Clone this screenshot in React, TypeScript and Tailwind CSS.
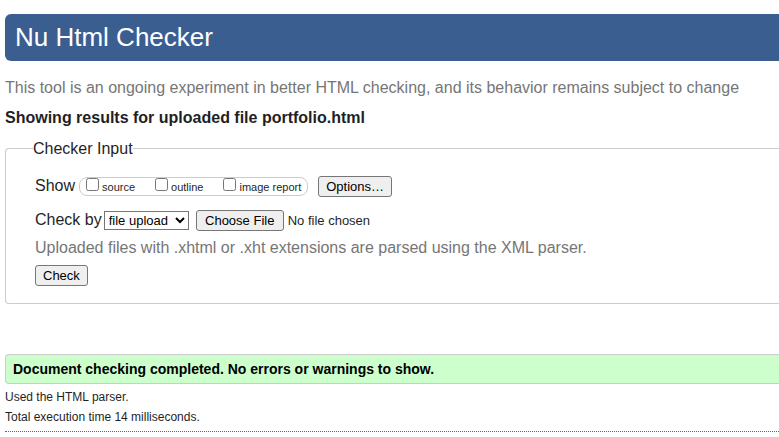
const checks = ["source", "outline", "image report"];

const buttonStyle =
  "h-[21px] rounded-[3px] border border-[#767676] bg-[#efefef] px-[7px] text-[13px] leading-[19px] text-black";

export default function App() {
  return (
    <div className="overflow-hidden bg-white pt-3.5 pl-[5px] font-['Liberation_Sans',Arial,sans-serif] text-base text-[#1f1f26]">
      <header className="rounded-l-md bg-[#3b5e91] px-2.5 py-1">
        <h1 className="text-[26px] leading-[39px] text-white">Nu Html Checker</h1>
      </header>

      <main>
        <p className="mt-[17px] leading-5 whitespace-nowrap text-[#767676]">
          This tool is an ongoing experiment in better HTML checking, and its behavior remains subject to change
        </p>
        <h2 className="mt-2.5 leading-5 font-bold">Showing results for uploaded file portfolio.html</h2>

        <form onSubmit={(event) => event.preventDefault()}>
          <fieldset className="mt-[9px] rounded-l border border-r-0 border-[#ccc] pr-4 pb-[17px] pl-[29px]">
            <legend className="-ml-0.5 pt-0.5 leading-5">Checker Input</legend>

            <div className="mt-[17px] flex h-[21px] items-center">
              <span className="pb-0.5 leading-5">Show</span>
              <div className="ml-1 flex h-[19px] items-start gap-5 rounded-lg border border-[#ccc] px-1.5">
                {checks.map((label) => (
                  <label key={label} className="flex gap-[3px] text-[11px] leading-[18px]">
                    <input type="checkbox" className="size-[13px]" />
                    {label}
                  </label>
                ))}
              </div>
              <button type="button" className={`ml-2.5 ${buttonStyle}`}>
                Options…
              </button>
            </div>

            <div className="mt-[13px] flex h-[21px] items-center">
              <label htmlFor="docselect" className="pb-0.5 leading-5">
                Check by
              </label>
              <select
                id="docselect"
                className="ml-0.5 h-[19px] w-[85px] rounded-none border border-[#767676] bg-white text-[13px] leading-4 text-black"
              >
                <option>file upload</option>
                <option>address</option>
                <option>text input</option>
              </select>
              <input
                type="file"
                aria-label="Uploaded file"
                className="ml-[7px] text-[13px] leading-[21px] file:mr-1 file:h-[21px] file:w-[88px] file:rounded-[3px] file:border file:border-solid file:border-[#767676] file:bg-[#efefef] file:px-2 file:text-[13px] file:leading-[19px] file:text-black"
              />
            </div>

            <p className="mt-[7px] leading-5 text-[#767676]">
              Uploaded files with .xhtml or .xht extensions are parsed using the XML parser.
            </p>
            <button type="submit" className={`mt-[7px] block ${buttonStyle}`}>
              Check
            </button>
          </fieldset>
        </form>

        <section className="mt-[50px]">
          <p className="rounded-l border border-r-0 border-[#ccc] bg-[#ccffcc] px-[7px] py-1 text-sm leading-5 font-bold text-black">
            Document checking completed. No errors or warnings to show.
          </p>
          <p className="mt-[3px] text-xs leading-5">Used the HTML parser.</p>
          <p className="text-xs leading-5">Total execution time 14 milliseconds.</p>
        </section>
        <hr className="mt-1 border-t border-dotted border-[#666]" />
      </main>
    </div>
  );
}
